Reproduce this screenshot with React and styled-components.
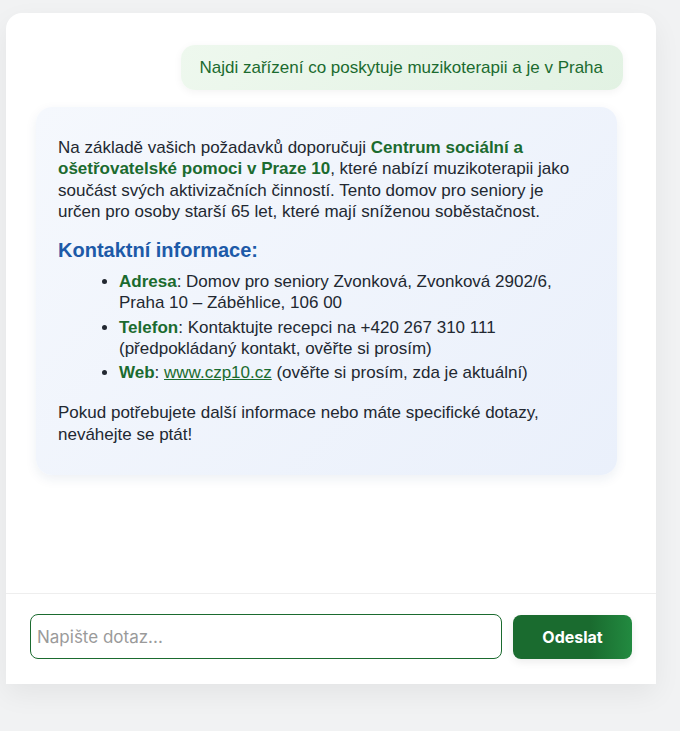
import React from "react";
import styled, { createGlobalStyle } from "styled-components";

const GlobalStyle = createGlobalStyle`
  html, body {
    margin: 0;
    padding: 0;
    background: #f1f2f3;
    font-family: "Liberation Sans", Arial, sans-serif;
  }
`;

const Page = styled.div`
  padding: 13px 24px 0 6px;
  height: 731px;
  box-sizing: border-box;
`;

const Card = styled.div`
  width: 650px;
  background: #fff;
  border-radius: 16px 16px 0 0;
  box-shadow: 0 10px 28px rgba(0, 0, 0, 0.06);
  display: flex;
  flex-direction: column;
`;

const Messages = styled.div`
  height: 580px;
  box-sizing: border-box;
  padding: 32px 33px 0 30px;
  display: flex;
  flex-direction: column;
  gap: 17px;
`;

const UserBubble = styled.div`
  align-self: flex-end;
  padding: 0 20px 0 19px;
  height: 45px;
  display: flex;
  align-items: center;
  border-radius: 14px;
  background: linear-gradient(135deg, #eef8ee, #e2f2e3);
  box-shadow: 0 2px 8px rgba(0, 0, 0, 0.05);
  color: #1b6b2f;
  font-size: 17px;
`;

const BotBubble = styled.div`
  width: 581px;
  box-sizing: border-box;
  padding: 30px 39px 30px 22px;
  border-radius: 16px;
  background: linear-gradient(135deg, #f5f8fd, #eaf0fb);
  box-shadow: 0 4px 12px rgba(30, 60, 120, 0.08);
  color: #222831;
  font-size: 17px;
  line-height: 21.25px;
`;

const Para = styled.p`
  margin: 0;
`;

const Strong = styled.strong`
  color: #1b6b2f;
  font-weight: 700;
`;

const Heading = styled.h3`
  margin: 16px 0 9px;
  font-size: 20px;
  line-height: 24px;
  color: #1d5aa8;
  font-weight: 700;
`;

const List = styled.ul`
  margin: 0 0 19px;
  padding-left: 61px;
`;

const Item = styled.li`
  margin-bottom: 3px;
  &:last-child {
    margin-bottom: 0;
  }
`;

const Link = styled.a`
  color: #1b6b2f;
  text-decoration: underline;
`;

const InputBar = styled.div`
  border-top: 1px solid #eeeeee;
  padding: 20px 24px 25px;
  display: flex;
  gap: 11px;
`;

const Input = styled.input`
  flex: 1;
  height: 45px;
  box-sizing: border-box;
  border: 1px solid #1b6b2f;
  border-radius: 8px;
  padding: 0 12px 0 6px;
  font-family: Inter, "Liberation Sans", sans-serif;
  font-size: 17px;
  outline: none;
  caret-color: #1a66ff;
  &::placeholder {
    color: #9a9a9a;
  }
`;

const SendButton = styled.button`
  width: 119px;
  height: 44px;
  margin-top: 1px;
  border: none;
  border-radius: 8px;
  background: linear-gradient(90deg, #1a6b2f 65%, #228a40);
  box-shadow: 0 3px 8px rgba(0, 0, 0, 0.08);
  color: #fff;
  font-family: Inter, "Liberation Sans", sans-serif;
  font-weight: 700;
  font-size: 16px;
`;

export default function App() {
  return (
    <Page>
      <GlobalStyle />
      <Card>
        <Messages>
          <UserBubble>Najdi zařízení co poskytuje muzikoterapii a je v Praha</UserBubble>
          <BotBubble>
            <Para>
              Na základě vašich požadavků doporučuji{" "}
              <Strong>Centrum sociální a ošetřovatelské pomoci v Praze 10</Strong>, které nabízí
              muzikoterapii jako součást svých aktivizačních činností. Tento domov pro seniory je
              určen pro osoby starší 65 let, které mají sníženou soběstačnost.
            </Para>
            <Heading>Kontaktní informace:</Heading>
            <List>
              <Item>
                <Strong>Adresa</Strong>: Domov pro seniory Zvonková, Zvonková 2902/6, Praha 10 –
                Záběhlice, 106 00
              </Item>
              <Item>
                <Strong>Telefon</Strong>: Kontaktujte recepci na +420 267 310 111 (předpokládaný
                kontakt, ověřte si prosím)
              </Item>
              <Item>
                <Strong>Web</Strong>: <Link href="#">www.czp10.cz</Link> (ověřte si prosím, zda je
                aktuální)
              </Item>
            </List>
            <Para>
              Pokud potřebujete další informace nebo máte specifické dotazy, neváhejte se ptát!
            </Para>
          </BotBubble>
        </Messages>
        <InputBar>
          <Input placeholder="Napište dotaz..." autoFocus />
          <SendButton>Odeslat</SendButton>
        </InputBar>
      </Card>
    </Page>
  );
}
